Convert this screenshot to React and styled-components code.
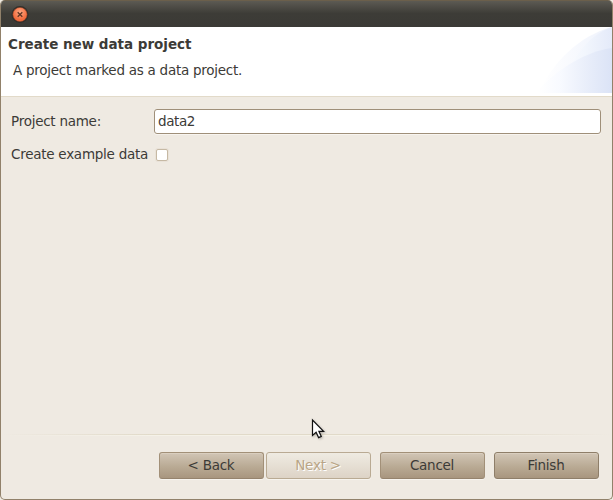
import React from "react";
import styled, { createGlobalStyle, css } from "styled-components";

const Global = createGlobalStyle`
  * { box-sizing: border-box; }
  body { margin: 0; background: #efebe3; overflow: hidden; }
`;

const Dialog = styled.main`
  position: relative;
  display: flex;
  flex-direction: column;
  width: 613px;
  height: 500px;
  overflow: hidden;
  border: 1px solid #91816a;
  border-top: 0;
  border-radius: 5px;
  background: #efeae2;
  color: #3c3b37;
  font: 13.5px/18px "DejaVu Sans", sans-serif;
  letter-spacing: -0.26px;
`;

const TitleBar = styled.header`
  flex: 0 0 27px;
  display: flex;
  padding: 5px 0 0 10px;
  border-top: 1px solid #6b5f4b;
  background: linear-gradient(#5c5a53, #3d3c37 48%, #3b3a36);
`;

const CloseIcon = styled.svg`
  display: block;
  width: 18px;
  height: 18px;
`;

const Banner = styled.section`
  flex: 0 0 70px;
  display: flex;
  justify-content: space-between;
  background: #fff;
  border-bottom: 1px solid #e2dac9;
`;

const Heading = styled.div`
  padding: 8px 0 0 7px;
`;

const Title = styled.h1`
  margin: 0;
  font-size: 13.5px;
  line-height: 18px;
  font-weight: bold;
  letter-spacing: -0.02px;
`;

const Description = styled.p`
  margin: 8px 0 0 5px;
`;

const BannerArt = styled.svg`
  display: block;
  width: 74px;
  height: 66px;
`;

const Form = styled.form`
  flex: 1;
  display: grid;
  grid-template-columns: 137px 447px;
  column-gap: 6px;
  grid-template-rows: 25px 18px;
  row-gap: 11px;
  align-items: center;
  align-content: start;
  padding: 12px 0 0 10px;
`;

const Label = styled.label`
  white-space: nowrap;
  &:first-child {
    padding-bottom: 1px;
  }
`;

const TextInput = styled.input`
  width: 447px;
  height: 25px;
  padding: 0 3px 1px;
  border: 1px solid #9f8f79;
  border-radius: 3px;
  outline: 0;
  background: #fff;
  box-shadow: 0 1px 0 #f8f5f0;
  color: inherit;
  font: inherit;
  letter-spacing: -0.4px;
`;

const CheckBox = styled.input`
  appearance: none;
  width: 12px;
  height: 12px;
  margin: 2px 0 0 2px;
  border: 1px solid #c6b9a4;
  border-radius: 2px;
  background: #fff;
  box-shadow: 0 0 0 1px #e9e2d8;
`;

const Divider = styled.div`
  flex: 0 0 2px;
  background:
    linear-gradient(90deg, #efeae2, #e1dac9 25%, #e1dac9 75%, #efeae2) 0 0 / 100% 1px no-repeat,
    linear-gradient(90deg, #efeae2, #f5f2e8 25%, #f5f2e8 75%, #efeae2) 0 1px / 100% 1px no-repeat;
`;

const ButtonBar = styled.footer`
  flex: 0 0 63px;
  display: flex;
  justify-content: flex-end;
  gap: 9px;
  padding: 16px 13px 0 0;
`;

const Navigation = styled.div`
  display: flex;
  gap: 2px;
`;

const Button = styled.button`
  width: 105px;
  height: 27px;
  padding: 0 1px 1px 0;
  border: 1px solid #a29078;
  border-bottom-color: #95836d;
  border-radius: 3px;
  background: linear-gradient(#d1c5b5, #b9aa94 55%, #a8967f);
  box-shadow: 0 1px 0 #f7f4ee, inset 0 1px 0 #d9cebf;
  color: #3c3b37;
  font: inherit;
  letter-spacing: inherit;
  ${({ $primary }) => $primary && css`
    border-color: #8e7e69;
  `}
  &:disabled {
    border-color: #b9aa93;
    background: linear-gradient(#efebe2, #ddd3c6);
    box-shadow: 0 1px 0 #f7f4ee;
    color: #b9a586;
    text-shadow: 1px 1px 0 #fff;
  }
`;

const Pointer = styled.svg`
  position: absolute;
  left: 310px;
  top: 418px;
  width: 16px;
  height: 24px;
  filter: drop-shadow(1px 1px 1px rgb(0 0 0 / 25%));
`;

function CloseButton() {
  return (
    <CloseIcon viewBox="0 0 18 18">
      <defs>
        <radialGradient id="orange" cy=".35">
          <stop offset="0" stopColor="#ffaa85" />
          <stop offset="1" stopColor="#f26c3e" />
        </radialGradient>
      </defs>
      <circle cx="9" cy="8.5" r="8.5" fill="#302f2b" />
      <circle cx="9" cy="8.5" r="7.1" fill="url(#orange)" stroke="#984324" strokeWidth=".5" />
      <path d="M6.7 6.2l4.6 4.6m0-4.6l-4.6 4.6" stroke="#633724" strokeWidth="1.4" />
    </CloseIcon>
  );
}

function BannerCurves() {
  return (
    <BannerArt viewBox="0 0 74 66">
      <defs>
        <linearGradient id="outer" gradientUnits="userSpaceOnUse" x1="4" x2="74" y1="0" y2="0">
          <stop offset="0" stopColor="#fff" />
          <stop offset="1" stopColor="#eef2fc" />
        </linearGradient>
        <linearGradient id="middle" gradientUnits="userSpaceOnUse" x1="20" x2="74" y1="0" y2="0">
          <stop offset="0" stopColor="#fcfdff" />
          <stop offset=".5" stopColor="#f2f6fd" />
          <stop offset="1" stopColor="#e4eaf9" />
        </linearGradient>
        <linearGradient id="inner" gradientUnits="userSpaceOnUse" x1="0" x2="74" y1="0" y2="0">
          <stop offset="0" stopColor="#fff" />
          <stop offset=".3" stopColor="#f8faff" />
          <stop offset=".65" stopColor="#e9eefa" />
          <stop offset="1" stopColor="#dbe3f6" />
        </linearGradient>
      </defs>
      <path d="M0 66C16 34 41 9 74 0V66Z" fill="url(#outer)" />
      <path d="M22 66C32 34 48 9 74 0V66Z" fill="url(#middle)" />
      <path d="M-3 66C20 42 46 25 74 21V66Z" fill="url(#inner)" />
    </BannerArt>
  );
}

export default function App() {
  return (
    <>
      <Global />
      <Dialog>
        <TitleBar><CloseButton /></TitleBar>
        <Banner>
          <Heading>
            <Title>Create new data project</Title>
            <Description>A project marked as a data project.</Description>
          </Heading>
          <BannerCurves />
        </Banner>
        <Form>
          <Label htmlFor="name">Project name:</Label>
          <TextInput id="name" defaultValue="data2" />
          <Label htmlFor="example">Create example data</Label>
          <CheckBox id="example" type="checkbox" />
        </Form>
        <Divider />
        <ButtonBar>
          <Navigation>
            <Button>&lt; Back</Button>
            <Button disabled>Next &gt;</Button>
          </Navigation>
          <Button>Cancel</Button>
          <Button $primary>Finish</Button>
        </ButtonBar>
        <Pointer viewBox="0 0 16 24">
          <path d="M1.5 2V17.5l3.6-3.3 2.5 5.4 2.7-1.2-2.4-5.1h4.7Z" fill="#fff" stroke="#111" strokeWidth="1.2" />
        </Pointer>
      </Dialog>
    </>
  );
}
